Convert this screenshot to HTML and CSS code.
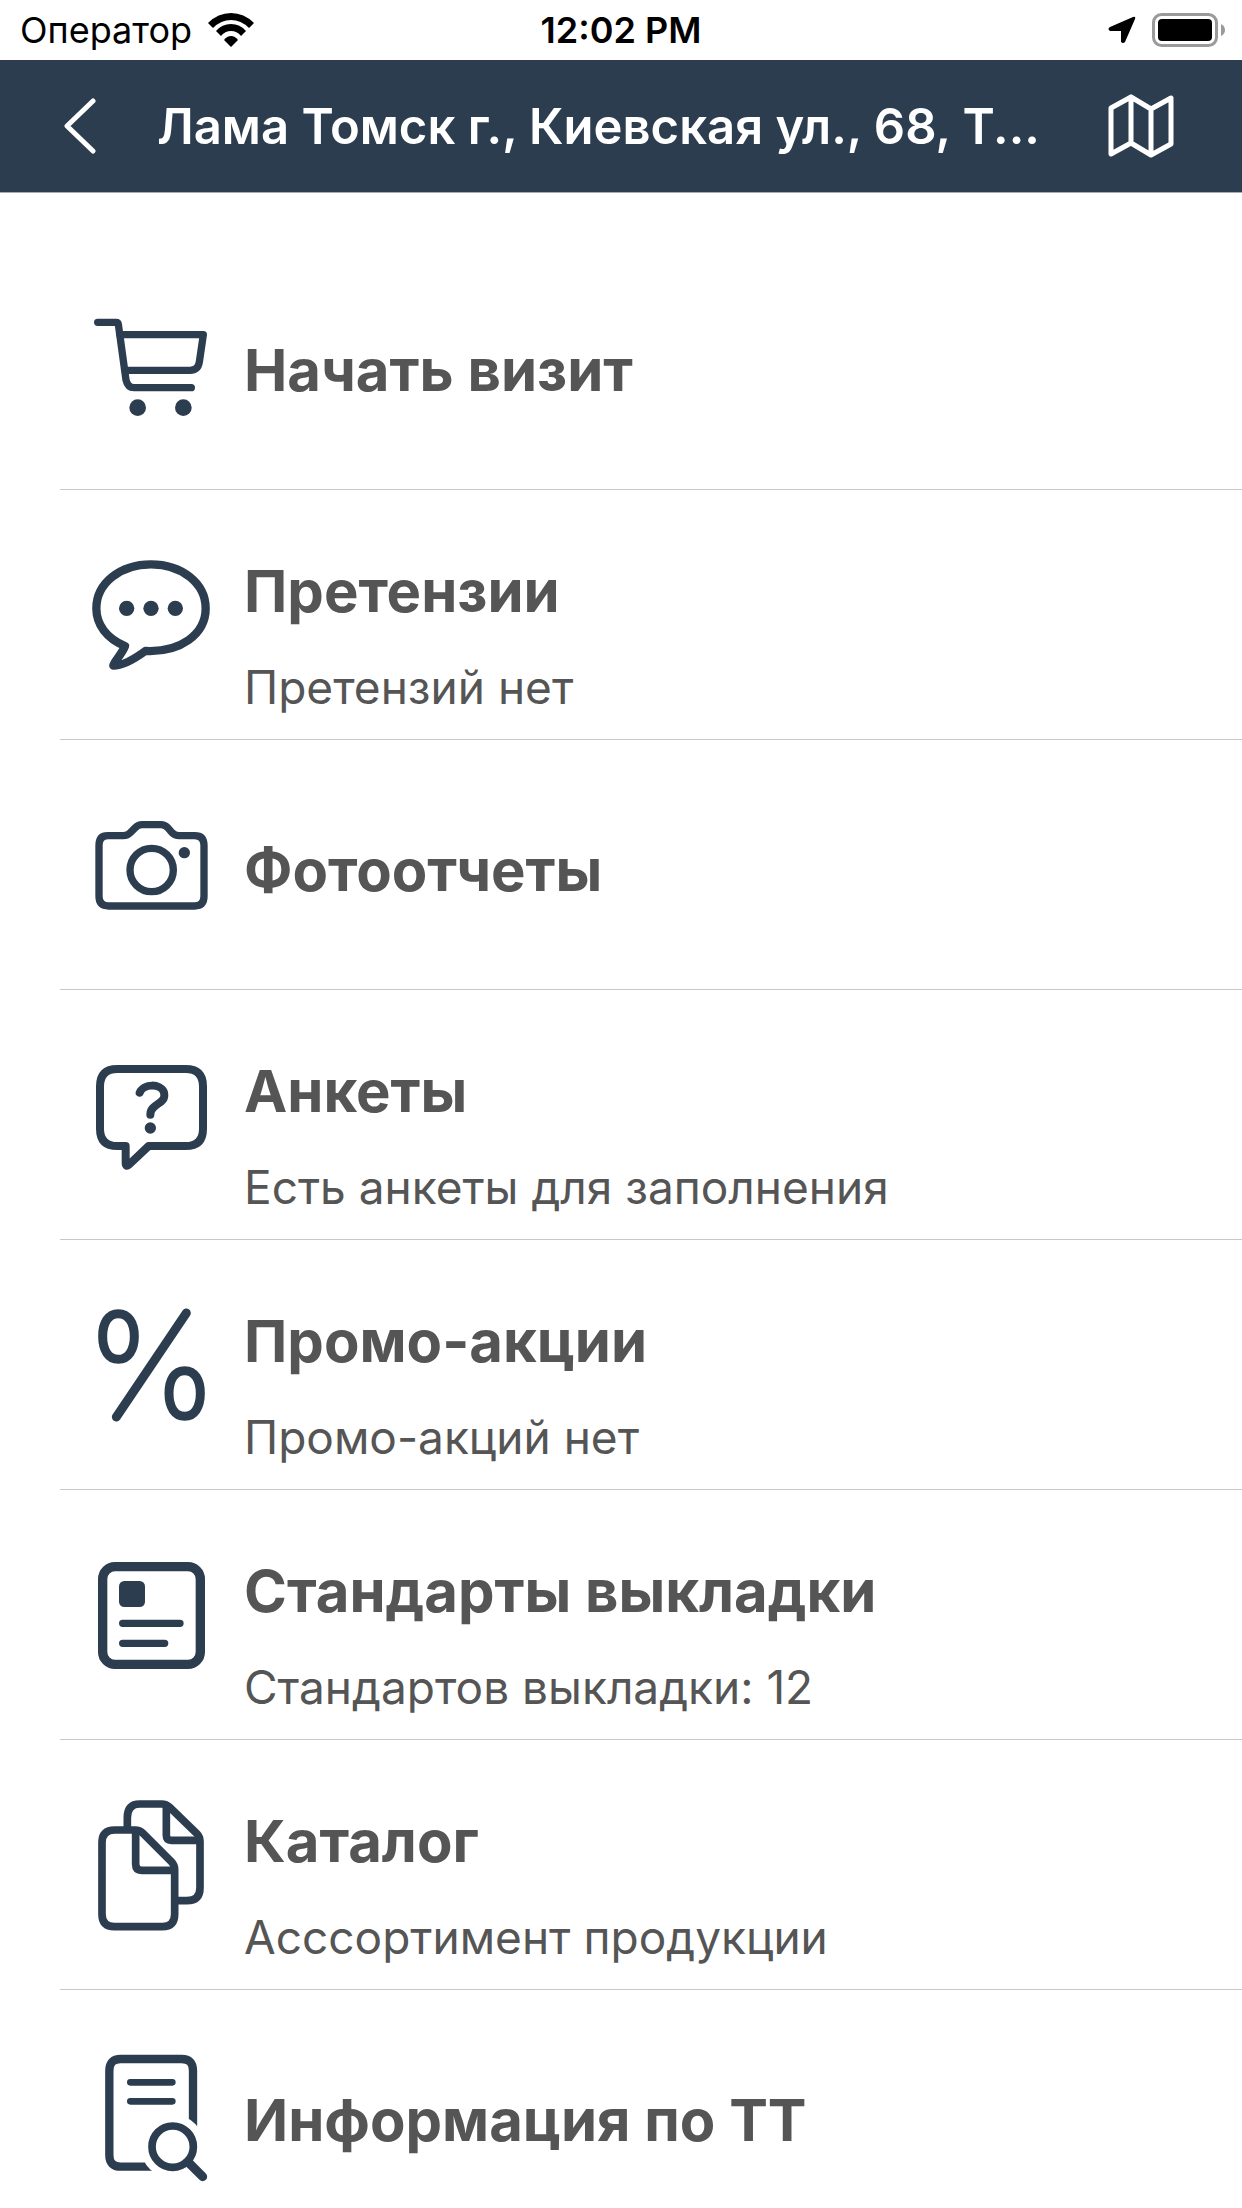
FILE: index.html
```
<!DOCTYPE html>
<html lang="ru">
<head>
    <meta charset="UTF-8">
    <meta name="viewport" content="width=device-width, initial-scale=1.0">
    <title>Лама Томск</title>
    <link rel="stylesheet" href="styles.css">
</head>
<body>

    <div class="status-bar">
        <div class="status-left">
            <span>Оператор</span>
            <svg class="wifi" viewBox="0 0 46 34" aria-hidden="true">
                <path d="M0 10 Q10 0 23 0 Q36 0 46 10 L41 15 Q33 7 23 7 Q13 7 5 15 Z"/>
                <path d="M8 18 Q14 11 23 11 Q32 11 38 18 L33 23 Q29 18 23 18 Q17 18 13 23 Z"/>
                <path d="M16 27 Q19 23 23 23 Q27 23 30 27 L23 34 Z"/>
            </svg>
        </div>
        <div class="status-time">12:02 PM</div>
        <div class="status-right">
            <svg class="location" viewBox="0 0 28 28" aria-hidden="true">
                <path d="M25 1 Q28 0 27 3 L17 26 Q15 28 13 26 L13 15 L2 15 Q-1 13 2 11 Z"/>
            </svg>
            <svg class="battery" viewBox="0 0 74 34" aria-hidden="true">
                <rect x="1.500" y="1.500" width="63" height="31" rx="8" fill="none" stroke="#9a9a9a" stroke-width="3"/>
                <rect x="6" y="6" width="54" height="22" rx="4"/>
                <path d="M69 11 Q73 13 73 17 Q73 21 69 23 Z" fill="#9a9a9a"/>
            </svg>
        </div>
    </div>

    <header class="header">
        <button type="button" class="header-button" aria-label="Назад">
            <svg class="back-icon" viewBox="0 0 32 56">
                <path d="M29 3 L3 28 L29 53"/>
            </svg>
        </button>
        <h1>Лама Томск г., Киевская ул., 68, Т...</h1>
        <button type="button" class="header-button" aria-label="Карта">
            <svg class="map-icon" viewBox="0 0 66 64">
                <path d="M3 14 L23 3 L43 15 L63 4 V50 L43 61 L23 49 L3 60 Z M23 3 V49 M43 15 V61"/>
            </svg>
        </button>
    </header>

    <main class="menu">
        <a href="#visit" class="menu-item">
            <svg class="menu-icon" viewBox="63 15 420 420">
                <g class="line" stroke-width="22">
                    <path d="M113 97 H169 Q174 97 175 103 L198 270 Q203 293 222 293 H394"/>
                    <path d="M180 134 H430 L418 216 Q414 241 390 241 H196"/>
                </g>
                <circle cx="233" cy="353" r="25"/>
                <circle cx="370" cy="353" r="25"/>
            </svg>
            <div class="menu-text">
                <h2>Начать визит</h2>
            </div>
        </a>
        <a href="#claims" class="menu-item">
            <svg class="menu-icon" viewBox="63 15 420 420">
                <path class="line" stroke-width="25" d="M195 318 C140 296 109 254 109 205 C109 130 180 73 273 73 C366 73 437 130 437 205 C437 284 360 338 256 333 Q196 377 160 377 C161 365 186 343 195 318 Z"/>
                <circle cx="200" cy="205" r="23"/>
                <circle cx="273" cy="205" r="23"/>
                <circle cx="346" cy="205" r="23"/>
            </svg>
            <div class="menu-text">
                <h2>Претензии</h2>
                <p>Претензий нет</p>
            </div>
        </a>
        <a href="#photos" class="menu-item">
            <svg class="menu-icon" viewBox="63 -15 420 420">
                <g class="line" stroke-width="22">
                    <path d="M143 107 H190 Q203 107 211 98 L226 83 Q235 74 246 74 H303 Q314 74 323 83 L336 98 Q345 107 357 107 H404 Q432 107 432 136 V289 Q432 318 404 318 H146 Q117 318 117 289 V136 Q117 107 143 107 Z"/>
                    <circle cx="275" cy="210" r="65"/>
                </g>
                <circle cx="373" cy="158" r="17"/>
            </svg>
            <div class="menu-text">
                <h2>Фотоотчеты</h2>
            </div>
        </a>
        <a href="#forms" class="menu-item">
            <svg class="menu-icon" viewBox="63 15 420 420">
                <g class="line" stroke-width="24">
                    <path d="M172 87 H377 Q429 87 429 139 V266 Q429 318 377 318 H266 L207 374 Q197 382 197 369 V318 H172 Q120 318 120 266 V139 Q120 87 172 87 Z"/>
                    <path d="M239 158 C250 130 302 130 312 157 C321 194 271 188 271 224"/>
                </g>
                <circle cx="271" cy="264" r="17"/>
            </svg>
            <div class="menu-text">
                <h2>Анкеты</h2>
                <p>Есть анкеты для заполнения</p>
            </div>
        </a>
        <a href="#promo" class="menu-item">
            <svg class="menu-icon" viewBox="63 15 420 420">
                <g class="line" stroke-width="27">
                    <path d="M379 69 L169 381"/>
                    <path d="M175 71 C205 71 223 98 223 139 C223 180 205 208 175 208 C145 208 128 180 128 139 C128 98 145 71 175 71 Z"/>
                    <path d="M374 242 C404 242 421 269 421 310 C421 351 404 379 374 379 C344 379 327 351 327 310 C327 269 344 242 374 242 Z"/>
                </g>
            </svg>
            <div class="menu-text">
                <h2>Промо-акции</h2>
                <p>Промо-акций нет</p>
            </div>
        </a>
        <a href="#standards" class="menu-item">
            <svg class="menu-icon" viewBox="63 15 420 420">
                <rect class="line" stroke-width="28" x="128" y="80" width="293" height="293" rx="37"/>
                <rect x="177" y="123" width="78" height="78" rx="16"/>
                <path class="line" stroke-width="22" d="M188 250 H360 M188 310 H314"/>
            </svg>
            <div class="menu-text">
                <h2>Стандарты выкладки</h2>
                <p>Стандартов выкладки: 12</p>
            </div>
        </a>
        <a href="#catalog" class="menu-item">
            <svg class="menu-icon" viewBox="63 45 420 420">
                <g class="line butt" stroke-width="23">
                    <path d="M202 145 V113 Q202 72 239 72 H305 Q319 72 329 82 L411 161 Q420 170 420 184 V323 Q420 362 381 362 H350"/>
                    <path d="M319 76 V166 Q319 181 334 181 H418"/>
                    <path d="M164 150 H226 Q239 150 248 159 L335 246 Q344 255 344 270 V403 Q344 440 307 440 H163 Q126 440 126 403 V188 Q126 150 164 150 Z"/>
                    <path d="M227 152 V253 Q227 271 245 271 H343"/>
                </g>
            </svg>
            <div class="menu-text">
                <h2>Каталог</h2>
                <p>Асссортимент продукции</p>
            </div>
        </a>
        <a href="#info" class="menu-item">
            <svg class="menu-icon" viewBox="63 45 420 420">
                <path class="line butt" stroke-width="25" d="M280 410 H182 Q148 410 148 375 V122 Q148 87 182 87 H365 Q399 87 399 122 V290"/>
                <path class="line" stroke-width="20" d="M211 157 H337 M211 214 H337"/>
                <circle cx="338" cy="350" r="96" fill="#fff"/>
                <circle class="line" stroke-width="23" cx="338" cy="350" r="62"/>
                <path class="line" stroke-width="27" d="M387 399 L428 440"/>
            </svg>
            <div class="menu-text">
                <h2>Информация по ТТ</h2>
            </div>
        </a>
    </main>

</body>
</html>
```
FILE: styles.css
```
* {
    box-sizing: border-box;
}
body {
    display: flex;
    flex-direction: column;
    height: 100vh;
    margin: 0;
    font-family: Inter, "Liberation Sans", sans-serif;
    background-color: #fff;
    color: #555;
}
svg {
    display: block;
    flex: none;
}
.status-bar {
    display: grid;
    grid-template-columns: 1fr auto 1fr;
    align-items: center;
    flex: none;
    height: 60px;
    padding: 0 16px;
    font-size: 36px;
    color: #000;
}
.status-left,
.status-right {
    display: flex;
    align-items: center;
    gap: 16px;
}
.status-left {
    padding-left: 4px;
}
.status-right {
    justify-content: flex-end;
}
.status-time {
    font-weight: 600;
}
.wifi {
    width: 46px;
    height: 34px;
}
.location {
    width: 28px;
    height: 28px;
}
.battery {
    width: 74px;
    height: 34px;
}
.header {
    display: flex;
    align-items: center;
    flex: none;
    height: 133px;
    padding: 0 68px 0 64px;
    background-color: #2c3d50;
    border-bottom: 1px solid #aaa;
}
.header h1 {
    flex: 1;
    min-width: 0;
    margin: 0 48px 0 61px;
    overflow: hidden;
    white-space: nowrap;
    font-size: 49px;
    font-weight: 600;
    color: #fff;
}
.header-button {
    padding: 0;
    border: none;
    background: none;
    cursor: pointer;
}
.header-button svg {
    fill: none;
    stroke: #fff;
    stroke-width: 5;
    stroke-linecap: round;
    stroke-linejoin: round;
}
.back-icon {
    width: 32px;
    height: 56px;
}
.map-icon {
    width: 66px;
    height: 64px;
}
.menu {
    flex: 1;
    min-height: 0;
    padding-top: 47px;
    overflow-y: auto;
    scrollbar-width: none;
}
.menu-item {
    display: flex;
    align-items: center;
    height: 250px;
    margin-left: 60px;
    padding-left: 21px;
    border-bottom: 1px solid #c8c8c8;
    color: #555;
    text-decoration: none;
}
.menu-icon {
    width: 140px;
    height: 140px;
    margin-right: 23px;
    fill: #2c3d50;
}
.line {
    fill: none;
    stroke: #2c3d50;
    stroke-linecap: round;
    stroke-linejoin: round;
}
.butt {
    stroke-linecap: butt;
}
.menu-text {
    display: flex;
    flex-direction: column;
    justify-content: flex-end;
    align-self: stretch;
    padding-top: 10px;
}
.menu-text h2 {
    margin: 0;
    font-size: 58px;
    line-height: 70px;
    font-weight: 700;
}
.menu-text h2:only-child {
    margin: auto 0;
}
.menu-text p {
    margin: 33px 0 24px;
    font-size: 46px;
    line-height: 56px;
}
```
